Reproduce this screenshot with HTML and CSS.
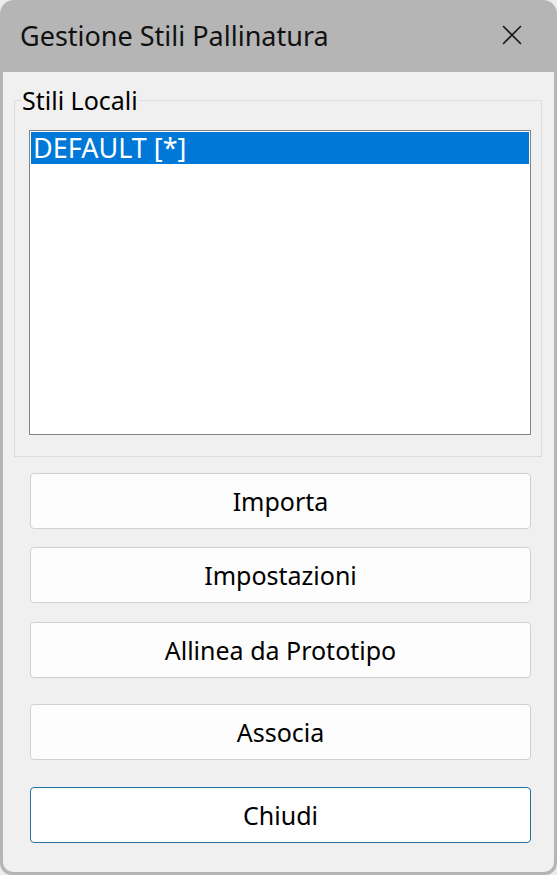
FILE: index.html
```html
<!DOCTYPE html>
<html>
<head>
<meta charset="utf-8">
<link rel="stylesheet" href="styles.css">
</head>
<body>
<div class="window">
  <div class="titlebar">
    <span class="title">Gestione Stili Pallinatura</span>
    <svg class="close" width="20" height="20" viewBox="0 0 20 20"><path d="M1 1L19 19M19 1L1 19" stroke="#1a1a1a" stroke-width="1.6" fill="none"/></svg>
  </div>
  <div class="content">
    <div class="group">
      <span class="legend">Stili Locali</span>
      <div class="listbox">
        <div class="item selected">DEFAULT [*]</div>
      </div>
    </div>
    <div class="buttons">
      <button class="btn b1">Importa</button>
      <button class="btn b2">Impostazioni</button>
      <button class="btn b3">Allinea da Prototipo</button>
      <button class="btn b4">Associa</button>
      <button class="btn b5 default">Chiudi</button>
    </div>
  </div>
</div>
</body>
</html>
```
FILE: styles.css
```css
html, body {
  margin: 0;
  padding: 0;
  background: #ececec;
}
body {
  font-family: "Noto Sans", "Open Sans", sans-serif;
  color: #000;
}
.window {
  width: 557px;
  height: 875px;
  box-sizing: border-box;
  background: #b5b5b5;
  border-radius: 14px 14px 12px 12px;
  display: flex;
  flex-direction: column;
  padding: 0 3px 3px 3px;
}
.titlebar {
  height: 72px;
  flex: none;
  display: flex;
  align-items: center;
  justify-content: space-between;
  padding: 0 32px 0 17px;
}
.title {
  font-size: 27px;
  color: #111;
  position: relative;
  top: -1px;
}
.close {
  position: relative;
  top: -1px;
}
.content {
  flex: 1;
  background: #f0f0f0;
  border-radius: 0 0 10px 10px;
  padding: 28px 12px 0 11px;
}
.group {
  position: relative;
  height: 357px;
  box-sizing: border-box;
  border: 1px solid #dcdcdc;
  padding: 29px 10px 0 14px;
}
.legend {
  position: absolute;
  left: 6px;
  top: -17px;
  font-size: 25px;
  line-height: 32px;
  background: #f0f0f0;
  padding: 0 1px;
}
.listbox {
  height: 305px;
  box-sizing: border-box;
  border: 1px solid #828282;
  background: #fff;
  padding: 1px;
}
.item {
  height: 32px;
  line-height: 32px;
  font-size: 27px;
  padding-left: 2px;
}
.selected {
  background: #0078d7;
  color: #fff;
}
.buttons {
  display: flex;
  flex-direction: column;
  padding: 0 11px 0 16px;
}
.btn {
  height: 56px;
  box-sizing: border-box;
  border: 1px solid #d0d0d0;
  border-radius: 4px;
  background: #fdfdfd;
  font-family: "Noto Sans", "Open Sans", sans-serif;
  font-size: 25px;
  color: #000;
  padding: 0;
}
.b1 { margin-top: 16px; }
.b2 { margin-top: 18px; }
.b3 { margin-top: 19px; }
.b4 { margin-top: 26px; }
.b5 { margin-top: 27px; }
.default {
  border-color: #2a6f9c;
  background: #fff;
}
```
